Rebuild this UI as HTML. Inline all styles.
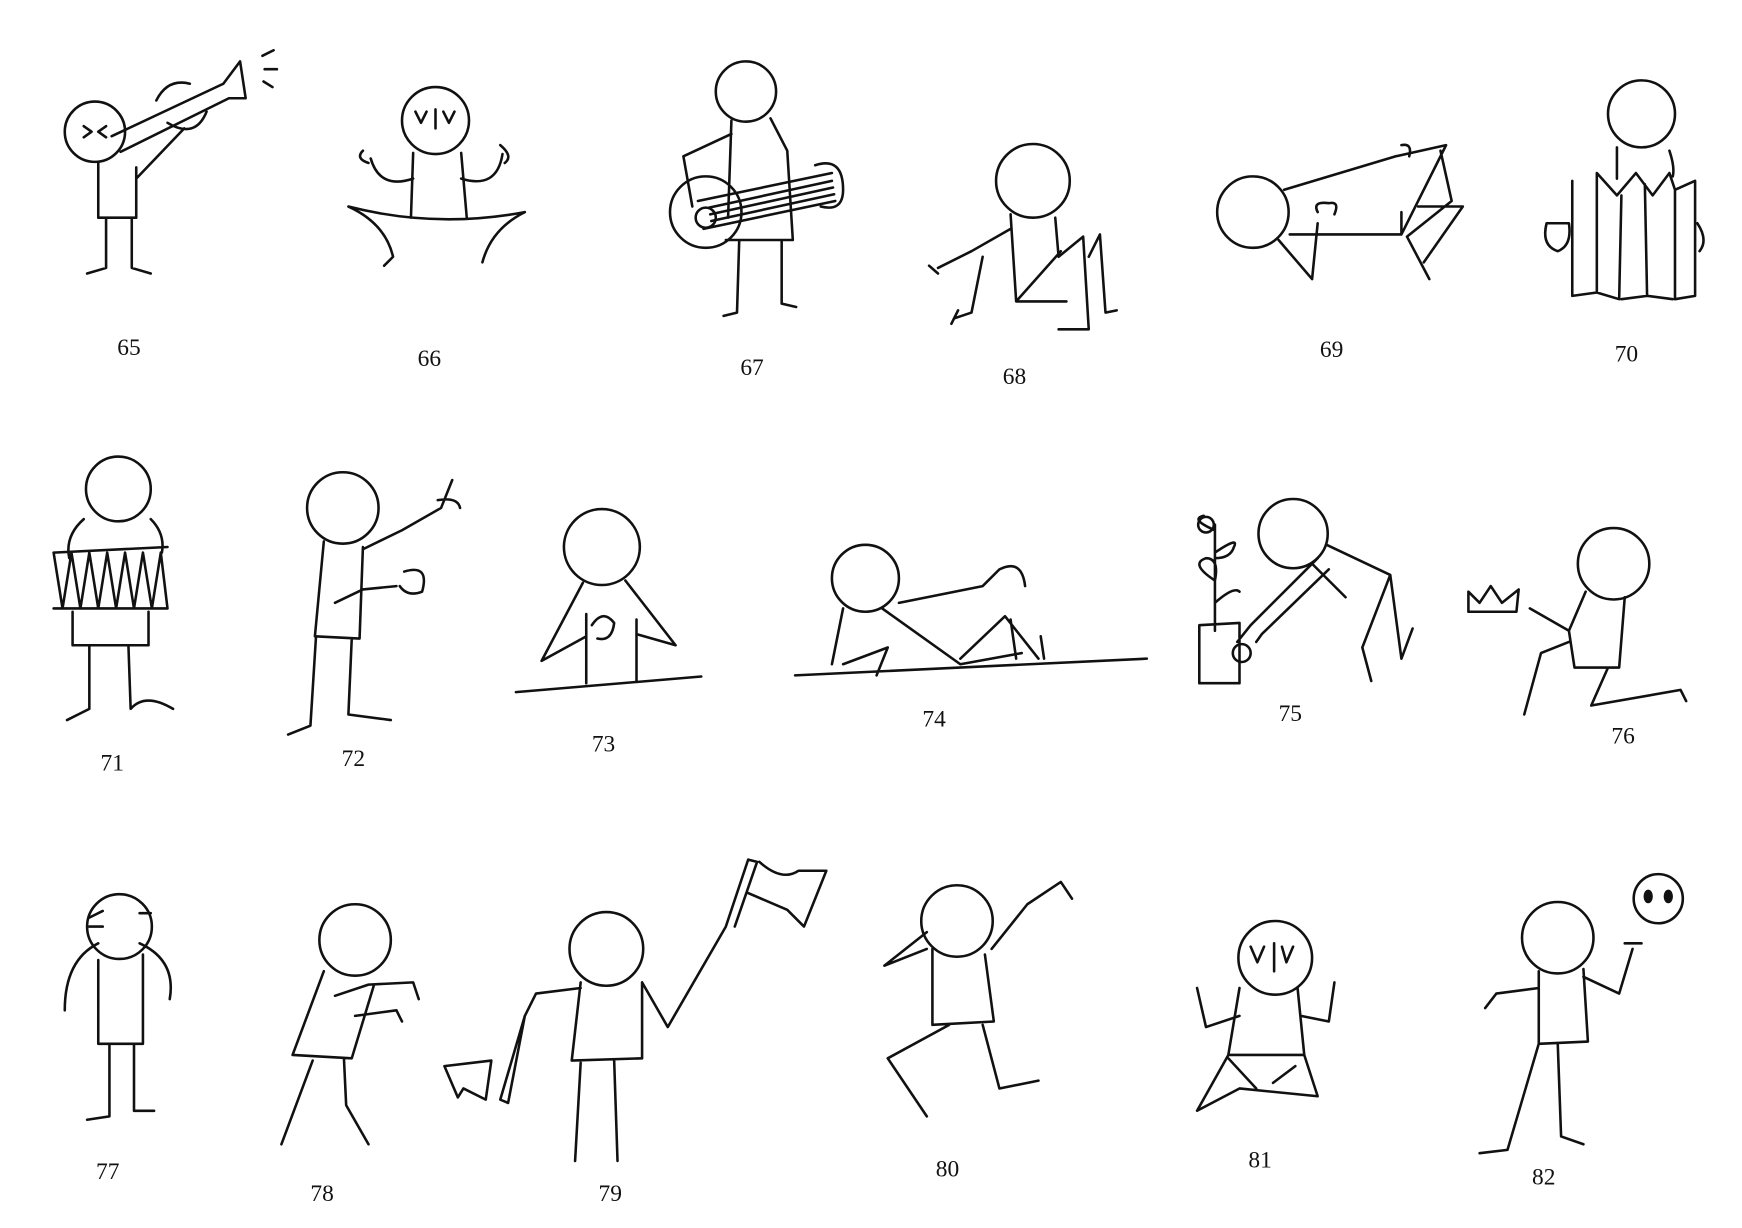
<!DOCTYPE html>
<html><head><meta charset="utf-8"><style>
html,body{margin:0;padding:0;background:#fff;}
svg{display:block;}
text{font-family:"Liberation Serif",serif;font-size:21px;fill:#111;}
</style></head><body>
<svg width="1742" height="1228" viewBox="0 0 1560 1100" preserveAspectRatio="none" xmlns="http://www.w3.org/2000/svg">
<rect width="1560" height="1100" fill="#fff"/>
<g fill="none" stroke="#111" stroke-width="2.3" stroke-linecap="round" stroke-linejoin="round">
<!-- 65 -->
<circle cx="85" cy="118" r="27"/>
<path d="M88 145 L88 195 L122 195 L122 150 M95 195 L95 240 L78 245 M118 195 L118 240 L135 245 M100 122 L200 75 M108 136 L205 88 M200 75 L215 55 L220 88 L205 88 M122 160 L165 115 M140 90 Q150 70 170 75 M150 110 Q175 125 185 100 M235 50 L245 45 M237 62 L248 62 M236 73 L244 78 M75 113 L82 118 L75 123 M95 113 L88 118 L95 123"/>
<!-- 66 -->
<circle cx="390" cy="108" r="30"/>
<path d="M370 137 L368 195 M413 137 L418 195 M312 185 Q390 205 470 190 M312 185 Q345 200 352 230 L344 238 M470 190 Q440 205 432 235 M370 160 Q340 170 332 142 M413 160 Q445 170 450 138 M325 135 Q318 142 330 146 M448 130 Q460 140 452 146 M372 100 L377 110 L382 100 M397 100 L402 110 L407 100 M390 98 L390 115"/>
<!-- 67 -->
<circle cx="668" cy="82" r="27"/>
<path d="M655 108 L652 195 M690 106 L705 135 L710 215 L650 215 M662 215 L660 280 L648 283 M700 215 L700 272 L713 275 M655 120 L612 140 L620 185"/>
<circle cx="632" cy="190" r="32"/>
<path d="M625 180 L745 155 M630 205 L748 180 M635 186 L745 162 M636 192 L746 168 M637 198 L747 174 M730 148 Q755 140 755 170 Q755 190 735 185"/>
<circle cx="632" cy="195" r="9"/>
<!-- 68 -->
<circle cx="925" cy="162" r="33"/>
<path d="M905 192 L910 270 L955 270 M945 195 L948 230 M910 270 L950 225 M948 230 L970 212 L975 295 L948 295 M975 230 L985 210 L990 280 L1000 278 M905 205 L870 225 L840 240 M880 230 L870 280 L855 285 M832 238 L840 245 M858 278 L852 290"/>
<!-- 69 -->
<circle cx="1122" cy="190" r="32"/>
<path d="M1150 170 L1250 140 M1155 210 L1255 210 L1255 190 M1250 140 L1295 130 L1255 210 M1290 135 L1300 180 L1260 212 M1270 185 L1310 185 L1275 235 M1260 212 L1280 250 M1145 215 L1175 250 L1180 200 M1180 190 Q1175 180 1190 182 Q1200 180 1195 192 M1255 130 Q1265 128 1262 140"/>
<!-- 70 -->
<circle cx="1470" cy="102" r="30"/>
<path d="M1408 162 L1408 265 L1430 262 L1430 155 L1448 175 L1465 155 L1480 175 L1495 155 L1500 170 L1518 162 L1518 265 L1500 268 L1500 170 M1430 262 L1450 268 L1452 175 M1452 268 L1475 265 L1473 165 M1475 265 L1498 268 M1448 160 Q1448 135 1448 132 M1495 135 Q1500 150 1498 158 M1385 200 Q1380 220 1395 225 Q1408 220 1405 200 Z M1520 200 Q1530 215 1522 225"/>
<!-- 71 -->
<circle cx="106" cy="438" r="29"/>
<path d="M75 465 Q58 480 62 500 M135 465 Q148 478 145 495 M48 495 L56 545 L64 495 L72 545 L80 495 L88 545 L96 495 L104 545 L112 495 L120 545 L128 495 L136 545 L144 495 L150 545 M48 495 L150 490 M48 545 L150 545 M65 548 L65 578 L133 578 L133 548 M80 578 L80 635 L60 645 M115 578 L117 635 Q130 620 155 635"/>
<!-- 72 -->
<circle cx="307" cy="455" r="32"/>
<path d="M290 485 L282 570 L322 572 L325 490 M283 570 L278 650 L258 658 M315 572 L312 640 L350 645 M325 492 L360 475 L395 455 L405 430 M392 448 Q410 445 412 455 M300 540 L325 528 L355 525 M362 512 Q385 505 378 530 Q365 535 358 525"/>
<!-- 73 -->
<circle cx="539" cy="490" r="34"/>
<path d="M522 522 L485 592 L525 570 M560 520 L605 578 L570 568 M525 550 L525 612 M570 555 L570 610 M462 620 L628 606 M530 560 Q540 545 550 558 Q548 575 535 572"/>
<!-- 74 -->
<circle cx="775" cy="518" r="30"/>
<path d="M712 605 L1027 590 M755 545 L745 595 M790 545 L860 595 L915 585 M805 540 L880 525 L895 510 Q915 500 918 525 M860 590 L900 552 L930 590 M905 555 L910 590 M932 570 L935 590 M755 595 L795 580 L785 605"/>
<!-- 75 -->
<circle cx="1158" cy="478" r="31"/>
<path d="M1188 488 L1245 515 L1220 580 L1228 610 M1245 515 L1255 590 L1265 563 M1180 500 L1120 560 L1108 575 M1190 510 L1130 568 L1125 575 M1175 505 L1205 535 M1074 560 L1074 612 L1110 612 L1110 558 Z M1088 565 L1088 470 M1088 520 Q1065 505 1080 500 Q1092 500 1088 520 M1088 495 Q1110 480 1105 490 Q1102 500 1088 500 M1088 475 Q1065 465 1078 462 M1088 540 Q1105 525 1110 530"/>
<circle cx="1112" cy="585" r="8"/>
<circle cx="1080" cy="470" r="7"/>
<!-- 76 -->
<circle cx="1445" cy="505" r="32"/>
<path d="M1420 530 L1405 565 L1410 598 L1450 598 L1455 535 M1405 565 L1370 545 M1405 575 L1380 585 L1365 640 M1440 598 L1425 632 L1505 618 L1510 628 M1315 548 L1315 530 L1325 540 L1335 525 L1345 540 L1360 528 L1358 548 Z"/>
<!-- 77 -->
<circle cx="107" cy="830" r="29"/>
<path d="M88 845 Q58 860 58 905 M125 845 Q158 860 152 895 M88 860 L88 935 L128 935 L128 855 M98 935 L98 1000 L78 1003 M120 935 L120 995 L138 995 M80 822 L92 816 M80 830 L92 830 M125 818 L135 818"/>
<!-- 78 -->
<circle cx="318" cy="842" r="32"/>
<path d="M290 870 L262 945 L315 948 L335 882 M280 950 L252 1025 M308 948 L310 990 L330 1025 M300 892 L330 882 L370 880 L375 895 M318 910 L355 905 L360 915"/>
<!-- 79 -->
<circle cx="543" cy="850" r="33"/>
<path d="M520 880 L512 950 L575 948 L575 880 M520 952 L515 1040 M550 950 L553 1040 M520 885 L480 890 L470 910 L448 985 L455 988 L470 910 M575 880 L598 920 L650 830 L670 770 L678 772 L658 830 M680 772 Q700 790 715 780 L740 780 L720 830 L705 815 L670 800 M398 955 L440 950 L435 985 L415 975 L410 983 Z"/>
<!-- 80 -->
<circle cx="857" cy="825" r="32"/>
<path d="M835 850 L835 918 L890 915 L882 855 M830 835 L792 865 L830 850 M888 850 L920 810 L950 790 L960 805 M850 918 L795 948 L830 1000 M880 918 L895 975 L930 968"/>
<!-- 81 -->
<circle cx="1142" cy="858" r="33"/>
<path d="M1110 885 L1100 945 L1168 945 L1162 885 M1100 945 L1072 995 L1110 975 L1180 982 L1168 945 M1100 948 L1125 975 M1140 970 L1160 955 M1110 910 L1080 920 L1072 885 M1165 910 L1190 915 L1195 880 M1120 848 L1126 862 L1132 848 M1148 848 L1152 862 L1158 848 M1141 845 L1141 870"/>
<!-- 82 -->
<circle cx="1395" cy="840" r="32"/>
<path d="M1378 870 L1378 935 L1422 933 L1418 868 M1378 935 L1350 1030 L1325 1033 M1395 935 L1398 1018 L1418 1025 M1378 885 L1340 890 L1330 903 M1418 875 L1450 890 L1462 850 M1455 845 L1470 845"/>
<circle cx="1485" cy="805" r="22"/>
<ellipse cx="1476" cy="803" rx="3" ry="5" fill="#111"/>
<ellipse cx="1494" cy="803" rx="3" ry="5" fill="#111"/>
</g>
<g>
<text x="105" y="318">65</text>
<text x="374" y="328">66</text>
<text x="663" y="336">67</text>
<text x="898" y="344">68</text>
<text x="1182" y="320">69</text>
<text x="1446" y="324">70</text>
<text x="90" y="690">71</text>
<text x="306" y="686">72</text>
<text x="530" y="673">73</text>
<text x="826" y="651">74</text>
<text x="1145" y="646">75</text>
<text x="1443" y="666">76</text>
<text x="86" y="1056">77</text>
<text x="278" y="1076">78</text>
<text x="536" y="1076">79</text>
<text x="838" y="1054">80</text>
<text x="1118" y="1046">81</text>
<text x="1372" y="1061">82</text>
</g>
</svg>
</body></html>
